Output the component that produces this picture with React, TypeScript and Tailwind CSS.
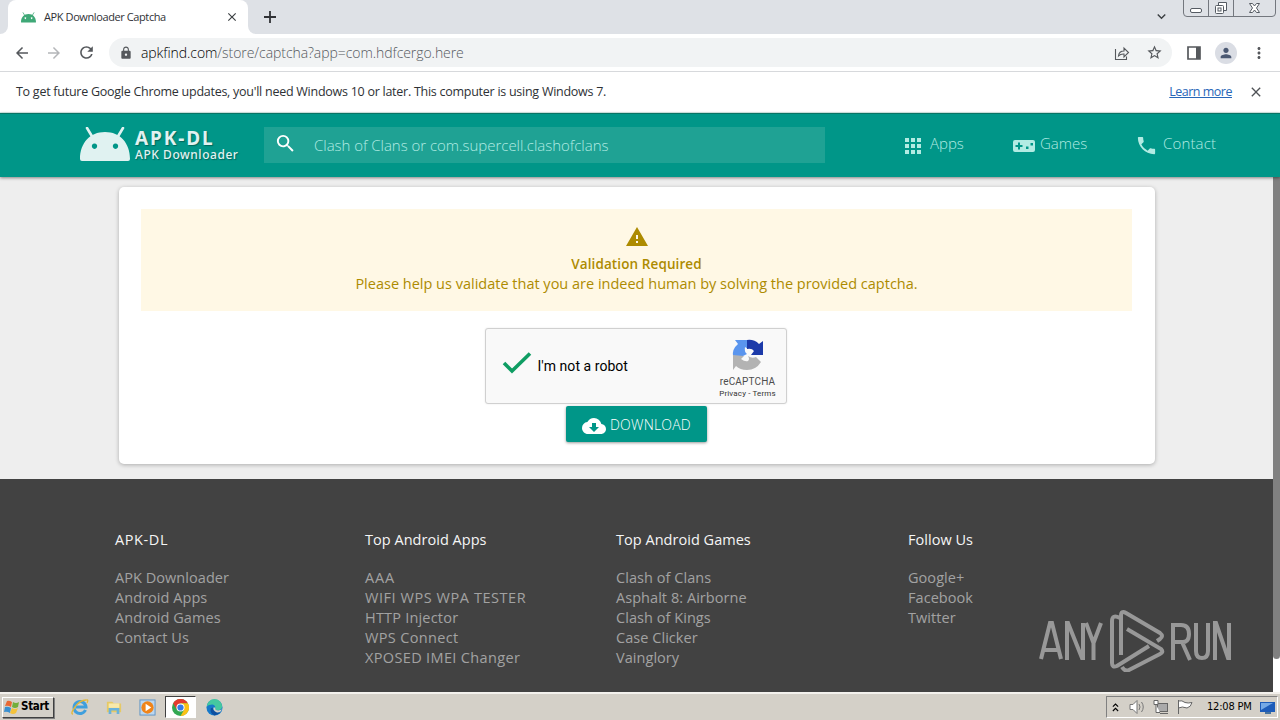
import type { ReactNode } from "react";
import {
  MdApps, MdArrowBack, MdArrowForward, MdClose, MdCloudDownload, MdExpandMore, MdLock,
  MdMoreVert, MdPerson, MdPhone, MdRefresh, MdSearch, MdStarBorder, MdWarning,
} from "react-icons/md";

function AndroidHead({ className }: { className: string }) {
  return (
    <svg viewBox="0 0 50 34" className={className} fill="currentColor">
      <path d="M7 1 13 11M43 1 37 11" stroke="currentColor" strokeWidth="2.6" strokeLinecap="round" />
      <path fillRule="evenodd" d="M0 32C0 16 10 5 25 5S50 16 50 32Q50 34 48 34H2Q0 34 0 32ZM14.5 16.500a2.700 2.700 0 1 0 .01 0ZM35.500 16.500a2.700 2.700 0 1 0 .01 0Z" />
    </svg>
  );
}

function TabStrip() {
  return (
    <div className="flex h-[34px] bg-[#dee1e6]">
      <div className="flex w-2 items-end bg-white"><div className="h-full w-full rounded-br-lg bg-[#dee1e6]" /></div>
      <div className="flex w-[240px] items-center rounded-t-lg bg-white pl-[13px] pr-[9px]">
        <AndroidHead className="h-[11px] w-[15px] text-[#3fa877]" />
        <span className="ml-[8px] flex-1 text-[11px] tracking-[-0.4px] text-[#303236]">APK Downloader Captcha</span>
        <MdClose className="size-[14px] text-[#3c4043]" />
      </div>
      <div className="w-2 bg-white"><div className="h-full w-full rounded-bl-lg bg-[#dee1e6]" /></div>
      <svg viewBox="0 0 12 12" className="ml-2 mt-[11px] size-3" stroke="#303236" strokeWidth="1.8"><path d="M6 0v12M0 6h12" /></svg>
      <MdExpandMore className="ml-auto mt-[8px] size-[17px] text-[#3c4043]" />
      <svg viewBox="0 0 94 18" className="ml-[13px] mr-[3px] h-[18px] w-[94px]" fill="none" stroke="#73777e">
        <path d="M.5 0v13Q.5 16.500 4 16.500H89Q92.500 16.500 92.500 13V0M25.500 0v16.500M50.500 0v16.500" />
        <rect x="7.500" y="8.500" width="11" height="4" rx="1.500" fill="#fff" stroke="#555b63" />
        <path d="M35.500 5.500v-3h8v8h-3" fill="#fff" stroke="#555b63" />
        <rect x="32.500" y="5.500" width="8" height="8" rx="1" fill="#fff" stroke="#555b63" />
        <rect x="35" y="8" width="3" height="3" stroke="#555b63" />
        <path d="M66.500 3.500h3l2 2.500 2-2.500h3l-3 4.500 3 4.500h-3l-2-2.500-2 2.500h-3l3-4.500Z" fill="#fff" stroke="#555b63" />
      </svg>
    </div>
  );
}

function Toolbar() {
  return (
    <div className="flex h-[38px] items-center border-b border-[#d7d9dc] bg-white pl-[13px] pr-[12px] text-[#55585c]">
      <MdArrowBack className="size-[18px]" />
      <MdArrowForward className="ml-[14px] size-[18px] text-[#b4b6b9]" />
      <MdRefresh className="ml-[14px] size-[19px]" />
      <div className="ml-[13px] flex h-[29px] w-[1064px] items-center rounded-full bg-[#f1f3f4] pl-[10px] pr-[9px]">
        <MdLock className="size-[14px]" />
        <span className="ml-2 flex-1 text-[14px] font-light tracking-[-0.06px] text-[#55595e]"><span className="text-black">apkfind.com</span>/store/captcha?app=com.hdfcergo.here</span>
        <svg viewBox="0 0 16 16" className="mr-[16px] size-4" fill="none" stroke="currentColor" strokeWidth="1.1"><path d="M1.500 4v10.500h11v-3M4.500 11q.5-5 5.500-5V3l4.500 4.500L10 12V9q-3.500-.2-5.500 2Z" /></svg>
        <MdStarBorder className="size-[17px]" />
      </div>
      <svg viewBox="0 0 14 14" className="ml-[15px] size-[14px]"><path d="M1 1h12v12H1Z" fill="none" stroke="currentColor" strokeWidth="1.700" /><path d="M9 1h4v12H9Z" fill="currentColor" /></svg>
      <div className="ml-[14px] flex size-[22px] items-center justify-center rounded-full bg-[#dadde4]"><MdPerson className="size-4 text-[#4a5872]" /></div>
      <MdMoreVert className="ml-[13px] size-[18px]" />
    </div>
  );
}

function InfoBar() {
  return (
    <div className="flex h-[41px] items-center border-b border-[#d9eeea] bg-white pl-4 pr-4 text-[12.5px] text-[#2e3135]">
      <span className="flex-1 tracking-[-0.26px]">To get future Google Chrome updates, you'll need Windows 10 or later. This computer is using Windows 7.</span>
      <span className="tracking-[-0.5px] text-[#2866b8] underline">Learn more</span>
      <MdClose className="ml-4 size-4 text-[#505357]" />
    </div>
  );
}

function GameIcon() {
  return (
    <svg viewBox="0 0 22 12" className="mt-[3px] h-3 w-[22px]" fill="currentColor">
      <path fillRule="evenodd" d="M2 0H20Q22 0 22 2V10Q22 12 20 12H2Q0 12 0 10V2Q0 0 2 0ZM5 2.500V5H2.500V7H5V9.500H7V7H9.500V5H7V2.500ZM13 6.500V9h2.500V6.500ZM17.500 3v2.500H20V3Z" />
    </svg>
  );
}

function SiteHeader() {
  return (
    <header className="z-10 flex h-[64px] border-t border-[#087465] bg-[#009688] pl-20 text-[#b2ebe3] shadow-[0_1px_3px_rgba(0,0,0,0.45)]">
      <AndroidHead className="mt-[13px] h-[34px] w-[50px] text-[#e0f2f1]" />
      <div className="ml-[5px] mt-[14px] w-[129px] font-['Noto_Sans'] text-[#e0f2f1] [text-shadow:1px_1px_1px_rgba(0,60,50,0.5)]">
        <div className="text-[19px] leading-[21px] font-bold tracking-[1.9px]">APK-DL</div>
        <div className="text-[12px] leading-3 font-medium tracking-[0.55px] whitespace-nowrap">APK Downloader</div>
      </div>
      <div className="mt-[13px] flex h-9 w-[561px] items-center bg-[#1fa294] pl-[10px]">
        <MdSearch className="-mt-[3px] size-[23px] text-white" />
        <span className="ml-[17px] text-[15px] font-light tracking-[-0.03px]">Clash of Clans or com.supercell.clashofclans</span>
      </div>
      <nav className="flex h-[60px] items-center pl-[76px] text-[15px] font-light">
        <div className="flex w-[112px] items-center gap-[5px]"><MdApps className="mt-[3px] size-[24px]" /><span className="-mt-[2px]">Apps</span></div>
        <div className="flex w-[122px] items-center gap-[5px]"><GameIcon /><span className="-mt-[2px]">Games</span></div>
        <div className="flex items-center gap-[5px]"><MdPhone className="mt-[3px] size-[23px]" /><span className="-mt-[2px] tracking-[0.15px]">Contact</span></div>
      </nav>
    </header>
  );
}

function RecaptchaMark() {
  return (
    <svg viewBox="0 0 32 32" className="size-8">
      <path d="M1 17Q0 10 6 5L3 1H16V10L13 8Q12 13 15 15L11 17Z" fill="#5a95ee" />
      <path d="M15 1Q22 0 27 5L31 2V16H19L22 12Q20 9 15 10Z" fill="#1c3aa9" />
      <path d="M1 31V16L12 17 9 20Q13 23 16 22 18 20 16 17 20 20 24 18L29 23Q24 31 15 31 8 31 4 27Z" fill="#b3b3b3" />
    </svg>
  );
}

function Captcha() {
  return (
    <div className="mt-[17px] mr-[2px] flex h-[76px] w-[302px] rounded-[3px] border border-[#d0d0d0] bg-[#f9f9f9] pl-[16px] shadow-[0_0_2px_rgba(0,0,0,0.1)]">
      <svg viewBox="0 0 30 22" className="mt-[23px] h-[22px] w-[30px]" fill="none" stroke="#0f9d63" strokeWidth="3.600"><path d="M2 11 10 19 28 1.500" /></svg>
      <span className="ml-[6px] mt-[27px] flex-1 font-[Roboto] text-[14px] leading-5 tracking-[0.05px] text-black">I'm not a robot</span>
      <div className="mr-[8px] mt-[10px] flex w-[60px] flex-col items-center font-[Roboto] text-[#4d4d4d]">
        <RecaptchaMark />
        <span className="mt-1 text-[10px] leading-[13px] tracking-[0.15px]">reCAPTCHA</span>
        <span className="text-[8px] leading-[12px] tracking-[0.15px] whitespace-nowrap text-[#333]">Privacy - Terms</span>
      </div>
    </div>
  );
}

function Main() {
  return (
    <main className="flex h-[302px] justify-center bg-[#eee] pt-[10px]">
      <section className="flex h-[277px] w-[1036px] flex-col items-center rounded-[5px] bg-white pt-[22px] shadow-[0_1px_4px_rgba(0,0,0,0.28)]">
        <div className="flex h-[102px] w-[991px] flex-col items-center bg-[#fff8e5] pt-4 text-[15px] leading-5 text-[#ad8b00]">
          <MdWarning className="size-6" />
          <strong className="mt-[5px] text-[13.5px] font-semibold tracking-[0.1px]">Validation Required</strong>
          <span className="text-[14.5px]">Please help us validate that you are indeed human by solving the provided captcha.</span>
        </div>
        <Captcha />
        <button className="mt-[2px] flex h-9 w-[141px] items-center rounded-[2px] bg-[#009688] pl-4 text-[14px] font-light tracking-[0.2px] text-white shadow-[0_1px_3px_rgba(0,0,0,0.4)]">
          <MdCloudDownload className="mr-1 mt-1 size-6" /><span>DOWNLOAD</span>
        </button>
      </section>
    </main>
  );
}

const columns = [
  { title: "APK-DL", width: "w-[250px]", links: ["APK Downloader", "Android Apps", "Android Games", "Contact Us"] },
  { title: "Top Android Apps", width: "w-[251px]", links: ["AAA", "WIFI WPS WPA TESTER", "HTTP Injector", "WPS Connect", "XPOSED IMEI Changer"] },
  { title: "Top Android Games", width: "w-[292px]", links: ["Clash of Clans", "Asphalt 8: Airborne", "Clash of Kings", "Case Clicker", "Vainglory"] },
  { title: "Follow Us", width: "w-[200px]", links: ["Google+", "Facebook", "Twitter"] },
];

const wideLinks: Record<string, string> = {
  "AAA": "tracking-[0.8px]",
  "WIFI WPS WPA TESTER": "tracking-[0.56px]",
  "HTTP Injector": "tracking-[0.2px]",
  "WPS Connect": "tracking-[0.35px]",
  "XPOSED IMEI Changer": "tracking-[0.35px]",
};

function Footer() {
  return (
    <footer className="flex h-[213px] bg-[#424242] pl-[115px] pt-[51px] text-[14.5px] leading-5 text-[#a2a2a2]">
      {columns.map((c) => (
        <div key={c.title} className={c.width}>
          <h3 className={c.title === "APK-DL" ? "mb-[18px] tracking-[0.6px] text-[#f5f5f5]" : "mb-[18px] tracking-[0.03px] text-[#f5f5f5]"}>{c.title}</h3>
          {c.links.map((l) => <div key={l} className={wideLinks[l] ?? "tracking-[0.05px]"}>{l}</div>)}
        </div>
      ))}
    </footer>
  );
}

function Watermark() {
  return (
    <div className="absolute left-[1039px] top-[608px] flex h-[64px] items-center text-[#989898]">
      <svg viewBox="0 0 192 64" className="h-16 w-48" fill="none" stroke="currentColor" strokeWidth="4">
        <path d="M2 51 11 15h2L22 51M5 42H19M28 52V15h1L43 50h1V15M47 15 54.500 35 62 15M54.500 34V52" />
        <path d="M81 10Q73 6 73 13V55Q73 60 78 58L110 38M82 47V8Q82 2 87 5L121 25Q125 28 121 31L118 33M88 21 122 41Q125 44 121 46L90 62Q86 64 83 59" strokeWidth="4" />
        <path d="M134 52V17h8Q150 17 150 26T142 34H134M143 34 151 52M157 15V43Q157 50 163 50T169 43V15M176 52V15h1L189 50h1V15" />
      </svg>
    </div>
  );
}

function ChromeIcon() {
  return (
    <svg viewBox="0 0 18 18" className="size-[17px]">
      <circle cx="9" cy="9" r="9" fill="#32a852" />
      <path d="M1.200 4.500A9 9 0 0 1 16.800 4.500H9L5.100 11.200Z" fill="#e33b2e" />
      <path d="M9 4.500h7.800A9 9 0 0 1 9 18l3.900-6.700Z" fill="#fbc116" />
      <circle cx="9" cy="9" r="4.300" fill="#fff" /><circle cx="9" cy="9" r="3.300" fill="#357be8" />
    </svg>
  );
}

function TaskItem({ children, active = false }: { children: ReactNode; active?: boolean }) {
  return active
    ? <div className="flex h-[22px] w-[31px] items-center justify-center border border-t-[#404040] border-r-white border-b-white border-l-[#404040] bg-white">{children}</div>
    : <div className="flex h-[22px] w-[34px] items-center justify-center">{children}</div>;
}

function Taskbar() {
  return (
    <div className="flex h-7 items-center border-t-2 border-[#f3f1ed] bg-[#d4d0c8] pl-[2px] pr-[2px]">
      <div className="flex h-[21px] w-[52px] items-center border border-t-white border-r-[#404040] border-b-[#404040] border-l-white text-black shadow-[1px_1px_0_#808080]">
        <svg viewBox="0 0 16 16" className="mx-px size-4">
          <path d="M3 2Q5 1 8 3L7 8Q4 6 1 7Z" fill="#e86834" /><path d="M9 3Q12 5 15 3L14 8Q11 10 8 8Z" fill="#72ae3c" />
          <path d="M1 8Q4 7 7 9L6 14Q3 12 0 13Z" fill="#398fd0" /><path d="M8 9Q11 11 14 9L12 14Q9 16 6 14Z" fill="#f4c23a" />
        </svg>
        <span className="font-['DejaVu_Sans_Condensed','DejaVu_Sans'] text-[11.5px] font-bold tracking-[-0.3px]">Start</span>
      </div>
      <div className="ml-[9px] flex items-center">
        <TaskItem>
          <svg viewBox="0 0 18 18" className="size-[18px]" fill="none"><path d="M14.500 12A6 6 0 1 1 15 9H5" stroke="#3f9fdd" strokeWidth="3" /><path d="M2 16Q-1 16 4 9T15 2Q18 1 16 5" stroke="#e3b83a" strokeWidth="1.300" /></svg>
        </TaskItem>
        <TaskItem>
          <svg viewBox="0 0 18 18" className="size-4"><path d="M1 3h6l2 2h8v10H1Z" fill="#e6c966" /><path d="M3 5h12v5H3Z" fill="#f8e9aa" /><path d="M3 17v-7h12v7h-3v-4H6v4Z" fill="#69b2dc" /></svg>
        </TaskItem>
        <TaskItem>
          <svg viewBox="0 0 18 18" className="mr-[2px] size-[17px]"><rect x="1" y="1" width="16" height="16" fill="#bcd7ef" stroke="#5f94c4" /><circle cx="9" cy="9" r="6.500" fill="#f08419" /><path d="m7 5 6 4-6 4Z" fill="#fff" /></svg>
        </TaskItem>
        <TaskItem active><ChromeIcon /></TaskItem>
        <TaskItem>
          <svg viewBox="0 0 18 18" className="ml-[3px] size-[17px]"><circle cx="9" cy="9" r="8.500" fill="#1679c9" /><path d="M1 8A8 8 0 0 1 17 8Q17 12 12 12 9 12 10 9 9 5 5 6 2 6 1 8Z" fill="#45c8a0" /><path d="M7 9Q7 14 15 14 13 17 9 17.500 4 15 5 10Z" fill="#0d4fa0" /><path d="M10 9Q9 12 13 12.200L17 11Q15 15 11 14 7 12 8 9Z" fill="#d4d0c8" /></svg>
        </TaskItem>
      </div>
      <div className="ml-auto flex h-[22px] w-[172px] items-center border border-t-[#808080] border-r-white border-b-white border-l-[#808080] text-black">
        <svg viewBox="0 0 8 10" className="ml-[5px] h-[9px] w-[7px]" fill="none" stroke="#000" strokeWidth="1.300"><path d="m1 4 3-3 3 3M1 9l3-3 3 3" /></svg>
        <svg viewBox="0 0 16 16" className="ml-[10px] size-4" fill="#fff" stroke="#777"><path d="M1 5.500h3l4-4v13l-4-4H1Z" /><path d="M10 5q2 3 0 6M12.500 3q3.500 5 0 10" fill="none" /></svg>
        <svg viewBox="0 0 16 16" className="ml-2 size-4" fill="#fff" stroke="#666"><rect x="4.500" y="4.500" width="10" height="8" fill="#aaa" /><path d="M7 14.500h8M1 1.500h4v4H1ZM3 5.500v8h4" /></svg>
        <svg viewBox="0 0 16 16" className="ml-2 size-4" fill="#fff" stroke="#666"><path d="M1.500 1v14M1.500 2Q5 1 8 3.500 11 4.500 15 3.500 14 8 10 9 5 7 1.500 9" /></svg>
        <span className="ml-[14px] flex-1 font-['DejaVu_Sans_Condensed','DejaVu_Sans'] text-[11px] tracking-[-0.2px] whitespace-nowrap">12:08 PM</span>
        <svg viewBox="0 0 15 13" className="mr-[2px] h-[13px] w-[15px] shrink-0"><path d="M0 1h15v10H0Z" fill="#1d5cb9" /><path d="M1 2h12L1 9Z" fill="#74a9e6" /><path d="M5 11h6v2H5Z" fill="#47739e" /></svg>
      </div>
    </div>
  );
}

export default function App() {
  return (
    <div className="relative flex h-[720px] w-[1280px] flex-col overflow-hidden bg-white font-['Open_Sans','Noto_Sans',sans-serif]">
      <TabStrip />
      <Toolbar />
      <InfoBar />
      <SiteHeader />
      <div className="flex h-[515px]">
        <div className="w-[1273px]"><Main /><Footer /></div>
        <div className="w-[7px] bg-white"><div className="h-[482px] rounded-b bg-[#808080]" /></div>
      </div>
      <Taskbar />
      <Watermark />
    </div>
  );
}
